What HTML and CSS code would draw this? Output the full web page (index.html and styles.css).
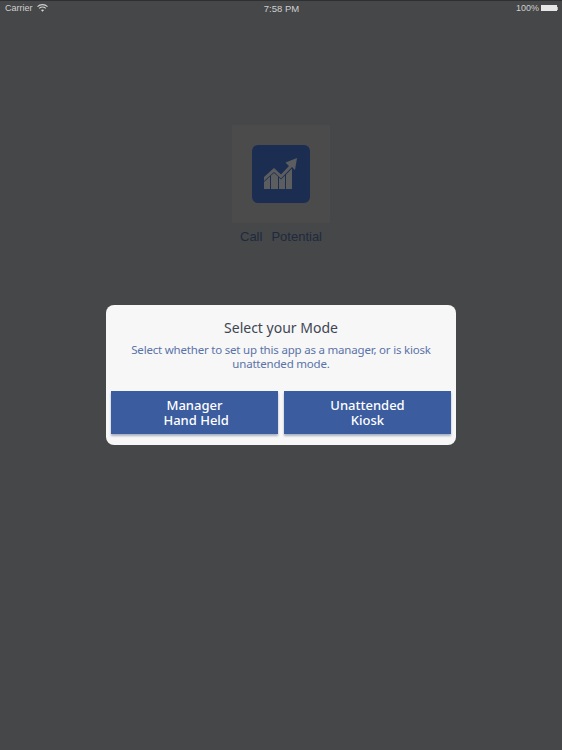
FILE: index.html
```html
<!DOCTYPE html>
<html lang="en">
<head>
  <meta charset="UTF-8">
  <meta name="viewport" content="width=device-width, initial-scale=1.0">
  <title>Call Potential</title>
  <link rel="stylesheet" href="styles.css">
</head>
<body>
  <div class="screen">
    <div class="status-bar">
      <div class="status-left">
        <span>Carrier</span>
        <svg class="wifi" width="11" height="8" viewBox="0 0 11 8" fill="none" stroke="#d4d4d4" stroke-width="1.1">
          <path d="M0.5 2.6 C3.2 0 7.8 0 10.5 2.6"/>
          <path d="M2.2 4.3 C4 2.7 7 2.7 8.8 4.3"/>
          <path d="M5.5 7.8 L3.9 6 C4.8 5.3 6.2 5.3 7.1 6 Z" fill="#d4d4d4" stroke="none"/>
        </svg>
      </div>
      <div class="status-time">7:58 PM</div>
      <div class="status-right">
        <span>100%</span>
        <div class="battery"></div>
        <div class="battery-tip"></div>
      </div>
    </div>

    <div class="brand">
      <div class="logo-box">
        <div class="logo">
          <svg width="58" height="58" viewBox="0 0 58 58" fill="#5c5d5f">
            <path d="M12 32 L22 23 L29 29.5 L37 21 L33.5 17.5 L45 13 L43 25 L40 22 L29 33.5 L22 27 L12 36 Z"/>
            <path d="M12 37 L18 31.5 L18 44 L12 44 Z"/>
            <path d="M19 30.5 L22 28 L26 31.5 L26 44 L19 44 Z"/>
            <path d="M27 32.5 L29 34.5 L33 30.5 L33 44 L27 44 Z"/>
            <path d="M34 29.5 L40 23.5 L40 44 L34 44 Z"/>
          </svg>
        </div>
      </div>
      <div class="brand-name"><span>Call</span><span>Potential</span></div>
    </div>

    <div class="dialog">
      <h1 class="dialog-title">Select your Mode</h1>
      <p class="dialog-text">Select whether to set up this app as a manager, or is kiosk unattended mode.</p>
      <div class="dialog-buttons">
        <button class="mode-btn">Manager<br>&nbsp;Hand Held</button>
        <button class="mode-btn">Unattended<br>Kiosk</button>
      </div>
    </div>
  </div>
</body>
</html>
```

FILE: styles.css
```css
html, body {
  margin: 0;
  padding: 0;
}

body {
  font-family: "Noto Sans", "Open Sans", sans-serif;
  background-color: #464748;
}

.screen {
  width: 562px;
  height: 750px;
  overflow: hidden;
  display: flex;
  flex-direction: column;
  align-items: center;
}

/* Status bar */
.status-bar {
  box-sizing: border-box;
  width: 100%;
  height: 15px;
  padding: 0 4px 0 5px;
  display: grid;
  grid-template-columns: 1fr auto 1fr;
  align-items: center;
  border-top: 1px solid #2e2f30;
  font-family: "Liberation Sans", Arial, sans-serif;
  font-size: 9px;
  color: #cfcfcf;
}

.status-left {
  display: flex;
  align-items: center;
  gap: 4px;
}

.status-time {
  font-size: 9.5px;
}

.status-right {
  display: flex;
  align-items: center;
  justify-content: flex-end;
}

.battery {
  width: 16px;
  height: 6px;
  margin-left: 2px;
  background-color: #e6e6e6;
}

.battery-tip {
  width: 1px;
  height: 3px;
  background-color: #bbb;
}

/* Logo block */
.brand {
  margin-top: 110px;
  display: flex;
  flex-direction: column;
  align-items: center;
}

.logo-box {
  width: 98px;
  height: 98px;
  background-color: #4b4b4b;
  display: flex;
  align-items: center;
  justify-content: center;
}

.logo {
  width: 58px;
  height: 58px;
  border-radius: 6px;
  background-color: #1c2d52;
}

.logo svg {
  display: block;
}

.brand-name {
  margin-top: 6px;
  display: flex;
  gap: 9px;
  font-family: "Liberation Sans", Arial, sans-serif;
  font-size: 13px;
  line-height: 15px;
  color: #1f2a3f;
}

/* Dialog */
.dialog {
  box-sizing: border-box;
  width: 350px;
  height: 140px;
  margin-top: 61px;
  padding: 13px 5px 0;
  background-color: #f7f7f7;
  border-radius: 8px;
  text-align: center;
}

.dialog-title {
  margin: 0;
  font-size: 14px;
  font-weight: 400;
  line-height: 20px;
  color: #3e4654;
}

.dialog-text {
  margin: 5px 15px 0;
  font-size: 11.5px;
  line-height: 14px;
  letter-spacing: -0.2px;
  color: #5a73a8;
}

.dialog-buttons {
  margin-top: 20px;
  display: flex;
  gap: 6px;
}

.mode-btn {
  flex: 1;
  height: 43px;
  padding: 0;
  border: 0;
  box-shadow: 0 2px 2px #a9b1c2;
  background-color: #3b5c9f;
  color: #fff;
  font-family: inherit;
  font-size: 13px;
  font-weight: 500;
  line-height: 14.5px;
}
```
